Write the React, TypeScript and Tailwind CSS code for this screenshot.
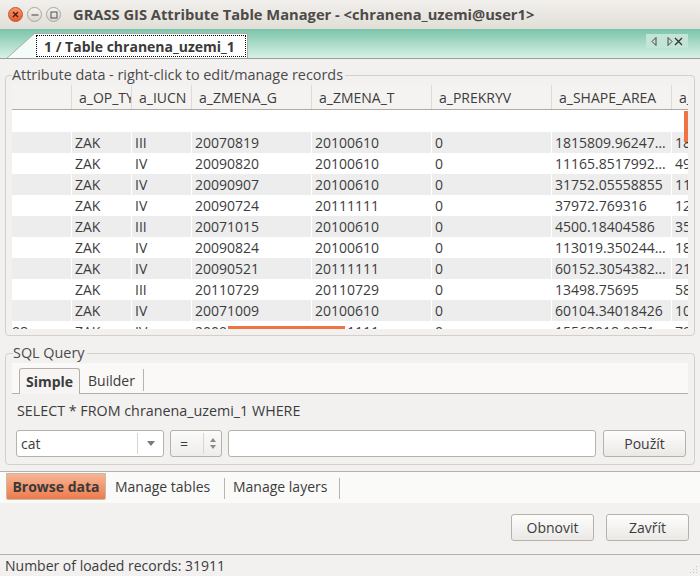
import React from 'react';

const cols = [
	{ title: '', w: 60 },
	{ title: 'a_OP_TYP', w: 60 },
	{ title: 'a_IUCN', w: 60 },
	{ title: 'a_ZMENA_G', w: 120 },
	{ title: 'a_ZMENA_T', w: 120 },
	{ title: 'a_PREKRYV', w: 120 },
	{ title: 'a_SHAPE_AREA', w: 120 },
	{ title: 'a_SHAPE_LEN', w: 60 },
];

const rows: string[][] = [
	['', '', '', '', '', '', '', ''],
	['', 'ZAK', 'III', '20070819', '20100610', '0', '1815809.96247…', '1815'],
	['', 'ZAK', 'IV', '20090820', '20100610', '0', '11165.8517992…', '4912'],
	['', 'ZAK', 'IV', '20090907', '20100610', '0', '31752.05558855', '1120'],
	['', 'ZAK', 'IV', '20090724', '20111111', '0', '37972.769316', '1234'],
	['', 'ZAK', 'III', '20071015', '20100610', '0', '4500.18404586', '3512'],
	['', 'ZAK', 'IV', '20090824', '20100610', '0', '113019.350244…', '1832'],
	['', 'ZAK', 'IV', '20090521', '20111111', '0', '60152.3054382…', '2143'],
	['', 'ZAK', 'III', '20110729', '20110729', '0', '13498.75695', '5812'],
	['', 'ZAK', 'IV', '20071009', '20100610', '0', '60104.34018426', '1021'],
	['98', 'ZAK', 'IV', '20090514', '20111111', '0', '15562018.0971…', '7912'],
];

const WinButton: React.FC<{ kind: 'close' | 'min' | 'max' }> = ({ kind }) => {
	if (kind === 'close') {
		return (
			<div className="w-[15px] h-[15px] rounded-full bg-gradient-to-b from-[#f7956a] to-[#e25a2b] border border-[#c6532c] flex items-center justify-center">
				<svg width="7" height="7" viewBox="0 0 7 7">
					<path d="M1 1 L6 6 M6 1 L1 6" stroke="#4a1c0c" strokeWidth="1.3" />
				</svg>
			</div>
		);
	}
	return (
		<div className="w-[15px] h-[15px] rounded-full bg-gradient-to-b from-[#f6f4f1] to-[#d9d5ce] border border-[#aaa59e] flex items-center justify-center">
			{kind === 'min' ? (
				<svg width="8" height="8" viewBox="0 0 8 8">
					<path d="M0.5 4 H7.5" stroke="#5c5c5c" strokeWidth="1.2" />
				</svg>
			) : (
				<svg width="8" height="8" viewBox="0 0 8 8">
					<rect x="1" y="1" width="6" height="6" fill="none" stroke="#5c5c5c" strokeWidth="1.1" />
				</svg>
			)}
		</div>
	);
};

const Button: React.FC<{ label: string; className?: string }> = ({ label, className }) => (
	<div
		className={`h-[27px] rounded-[3px] border border-[#b6b1aa] bg-gradient-to-b from-[#fdfdfc] to-[#ebe9e6] flex items-center justify-center text-[#3c3c3c] ${className ?? ''}`}
	>
		{label}
	</div>
);

export default function App() {
	return (
		<div className="w-[700px] h-[578px] bg-[#f2f1f0] flex flex-col overflow-hidden font-['Open_Sans',sans-serif] text-[14px] text-[#3c3c3c]">
			{/* title bar */}
			<div className="h-[29px] flex items-center bg-gradient-to-b from-[#f2f0ed] to-[#e2ded7] pl-[8px]">
				<div className="flex items-center gap-[4px]">
					<WinButton kind="close" />
					<WinButton kind="min" />
					<WinButton kind="max" />
				</div>
				<span className="ml-[12px] font-bold text-[14.7px] text-[#4d4b48]">
					GRASS GIS Attribute Table Manager - &lt;chranena_uzemi@user1&gt;
				</span>
			</div>

			{/* notebook tab strip */}
			<div className="h-[30px] flex items-end justify-between bg-gradient-to-b from-[#78c4a9] to-[#d8f1e8] border-b border-[#9c9e9c]">
				<div className="flex items-end pl-[7px]">
					<svg width="28" height="25" viewBox="0 0 28 25" className="block">
						<polygon points="0,25 28,0 28,25" fill="#f4fbf8" />
						<path d="M0 25 L28 0" stroke="#a9aca9" strokeWidth="1" />
					</svg>
					<div className="h-[25px] w-[213px] bg-white border-t border-r border-[#a9aca9] px-[1px] pt-[1px]">
						<div className="h-[22px] border border-dotted border-black flex items-center pl-[7px] font-bold text-[#3a3a3a]">
							1 / Table chranena_uzemi_1
						</div>
					</div>
				</div>
				<div className="self-start mt-[5px] mr-[12px] w-[42px] h-[14px] bg-[#c2e5d8] flex items-center justify-between px-[5px]">
					<svg width="6" height="9" viewBox="0 0 6 9">
						<path d="M5 0.5 L1 4.5 L5 8.5 Z" fill="none" stroke="#444" strokeWidth="1" />
					</svg>
					<svg width="6" height="9" viewBox="0 0 6 9" className="ml-[8px]">
						<path d="M1 0.5 L5 4.5 L1 8.5 Z" fill="none" stroke="#444" strokeWidth="1" />
					</svg>
					<svg width="9" height="9" viewBox="0 0 9 9">
						<path d="M1 1 L8 8 M8 1 L1 8" stroke="#333" strokeWidth="1.3" />
					</svg>
				</div>
			</div>

			{/* attribute data */}
			<fieldset className="mx-[5px] mt-[7px] border border-[#d3d0cb] rounded-[4px] px-[6px] pt-[1px] pb-[6px]">
				<legend className="leading-[18px] pr-[2px] text-[14.4px] text-[#4a4a4a]">
					Attribute data - right-click to edit/manage records
				</legend>
				<div className="relative w-[676px] h-[244px] overflow-hidden bg-white">
					<div className="flex h-[25px] bg-[#f4f3f1] border-b border-[#aeaaa4]">
						{cols.map((c, i) => (
							<div
								key={i}
								style={{ width: c.w }}
								className="shrink-0 border-r border-[#dedbd6] pl-[7px] flex items-center whitespace-nowrap overflow-hidden text-[#3c3c3c]"
							>
								{c.title}
							</div>
						))}
					</div>
					{rows.map((r, ri) => (
						<div
							key={ri}
							className={`flex ${ri === 0 ? 'h-[22px]' : 'h-[21px]'} ${ri % 2 === 1 ? 'bg-[#ededed]' : 'bg-white'}`}
						>
							{r.map((v, ci) => (
								<div
									key={ci}
									style={{ width: cols[ci].w }}
									className={`shrink-0 border-r border-white flex items-center whitespace-nowrap overflow-hidden ${ci === 0 ? 'pl-0' : 'pl-[3px]'}`}
								>
									{v}
								</div>
							))}
						</div>
					))}
					{/* overlay scrollbars */}
					<div className="absolute right-0 top-[26px] w-[4px] h-[31px] bg-[#ee7345]" />
					<div className="absolute bottom-0 left-[216px] w-[117px] h-[3px] bg-[#ee7345]" />
				</div>
			</fieldset>

			{/* sql query */}
			<fieldset className="mx-[5px] mt-[8px] border border-[#d3d0cb] rounded-[4px] px-[7px] pt-[1px] pb-[7px]">
				<legend className="leading-[18px] pr-[2px] text-[14.4px] text-[#4a4a4a]">SQL Query</legend>
				<div className="h-[31px] -mx-[1px] bg-[#faf9f8] border-b border-[#b3b0ab] flex items-end pl-[7px]">
					<div className="h-[26px] w-[61px] bg-[#f6f5f4] border border-b-0 border-[#b3b0ab] rounded-t-[3px] -mb-[1px] flex items-center justify-center font-bold">
						Simple
					</div>
					<div className="h-[26px] w-[63px] flex items-center justify-center">Builder</div>
					<div className="w-px h-[22px] bg-[#b8b4ae] mb-[2px]" />
				</div>
				<div className="mt-[8px] pl-[4px] leading-[18px] text-[14.3px]">SELECT * FROM chranena_uzemi_1 WHERE</div>
				<div className="mt-[10px] flex items-center h-[27px] pl-[3px]">
					<div className="w-[148px] h-[27px] bg-white border border-[#b6b1aa] rounded-[3px] flex items-center">
						<span className="flex-1 pl-[4px]">cat</span>
						<div className="w-px h-[21px] bg-[#d8d5d0]" />
						<div className="w-[25px] flex items-center justify-center">
							<svg width="8" height="5" viewBox="0 0 8 5">
								<path d="M0 0 H8 L4 5 Z" fill="#7a7a7a" />
							</svg>
						</div>
					</div>
					<div className="ml-[6px] w-[52px] h-[27px] bg-gradient-to-b from-[#fbfbfa] to-[#eeedeb] border border-[#b6b1aa] rounded-[3px] flex items-center">
						<span className="w-[32px] pl-[9px]">=</span>
						<div className="w-px h-[21px] bg-[#d8d5d0]" />
						<div className="flex-1 flex flex-col items-center gap-[3px]">
							<svg width="6" height="4" viewBox="0 0 6 4">
								<path d="M0 4 H6 L3 0 Z" fill="#8a8a8a" />
							</svg>
							<svg width="6" height="4" viewBox="0 0 6 4">
								<path d="M0 0 H6 L3 4 Z" fill="#8a8a8a" />
							</svg>
						</div>
					</div>
					<div className="ml-[6px] w-[368px] h-[27px] bg-white border border-[#b6b1aa] rounded-[3px]" />
					<Button label="Použít" className="ml-[7px] w-[83px]" />
				</div>
			</fieldset>

			{/* bottom notebook tabs */}
			<div className="mt-[6px] h-[32px] bg-[#fafaf9] border-t border-[#b5b2ad] flex items-start">
				<div className="ml-[6px] mt-[1px] w-[100px] h-[27px] bg-gradient-to-b from-[#f6b594] to-[#ee7a4c] border border-[#c9b8ad] rounded-b-[2px] flex items-center justify-center font-bold text-[#3a3a3a]">
					Browse data
				</div>
				<div className="mt-[1px] h-[27px] w-[118px] flex items-center pl-[9px]">Manage tables</div>
				<div className="mt-[6px] w-px h-[21px] bg-[#b8b4ae]" />
				<div className="mt-[1px] h-[27px] w-[114px] flex items-center pl-[8px]">Manage layers</div>
				<div className="mt-[6px] w-px h-[21px] bg-[#b8b4ae]" />
			</div>

			{/* buttons */}
			<div className="flex justify-end gap-[12px] pr-[11px] mt-[11px]">
				<Button label="Obnovit" className="w-[83px]" />
				<Button label="Zavřít" className="w-[83px]" />
			</div>

			{/* status bar */}
			<div className="mt-[13px] flex-1 border-t border-[#b5b2ad] flex flex-col">
				<div className="h-[21px] flex items-center pl-[5px] relative">
					Number of loaded records: 31911
					<svg width="10" height="10" viewBox="0 0 10 10" className="absolute right-[2px] bottom-0">
						<g fill="#c8c5c0">
							<rect x="8" y="0" width="1" height="1" />
							<rect x="5" y="3" width="1" height="1" />
							<rect x="8" y="3" width="1" height="1" />
							<rect x="2" y="6" width="1" height="1" />
							<rect x="5" y="6" width="1" height="1" />
							<rect x="8" y="6" width="1" height="1" />
						</g>
					</svg>
				</div>
				<div className="flex-1 bg-white" />
			</div>
		</div>
	);
}
